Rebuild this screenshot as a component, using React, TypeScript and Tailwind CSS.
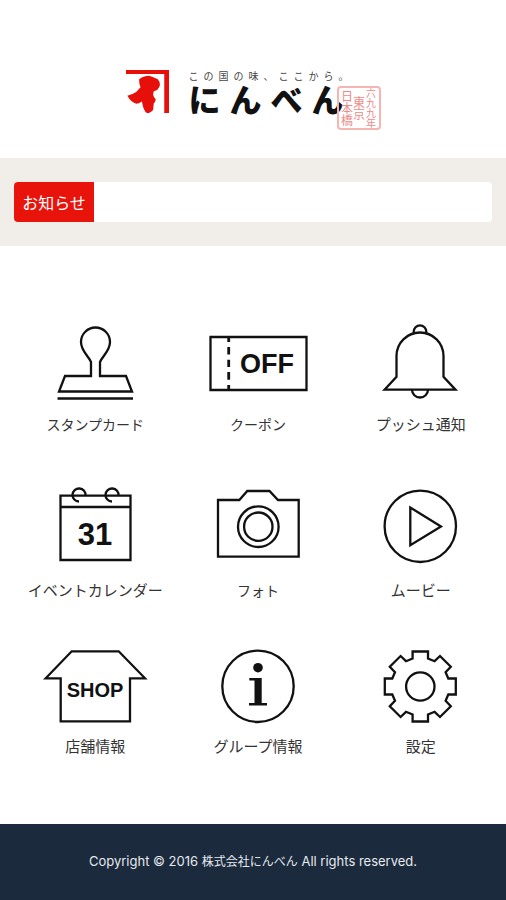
import type { ReactNode } from "react"

type MenuItem = {
    label: string
    href: string
    small?: boolean
    height: number
    icon: ReactNode
}

const menu: MenuItem[] = [
    {
        label: "スタンプカード",
        href: "#stamp",
        small: true,
        height: 80,
        icon: (
            <>
                <path d="M48 54V40C45.5 34 38 29 38 20a14.5 14.5 0 0 1 29 0C67 29 59.500 34 57 40V54H83L89 69.500H16L22 54Z" />
                <path d="M14.500 76.500H90" />
            </>
        ),
    },
    {
        label: "クーポン",
        href: "#coupon",
        small: true,
        height: 80,
        icon: (
            <>
                <path d="M4.500 15H100.500V68H4.500Z" />
                <path d="M22.700 15V20M22.700 25V32.500M22.700 37.700V45M22.700 50V57.700M22.700 63V68" strokeWidth={2.800} />
                <IconText x={61} y={51} size={27}>OFF</IconText>
            </>
        ),
    },
    {
        label: "プッシュ通知",
        href: "#push",
        height: 80,
        icon: (
            <>
                <path d="M15.500 67.700 27.500 54.700V34a23.500 23.500 0 0 1 47 0V54.700L86.500 67.700Z" />
                <path d="M44.700 11V9.700a6.300 6.300 0 0 1 12.600 0V11" />
                <path d="M43 67.700a8 7.800 0 0 0 16 0" />
            </>
        ),
    },
    {
        label: "イベントカレンダー",
        href: "#event",
        height: 84,
        icon: (
            <>
                <path d="M17.500 11.700H87.500V76H17.500ZM17.500 23H87.500" />
                <path d="M42.500 11.700A6.500 6.500 0 1 0 36 17.500M75.500 11.700A6.500 6.500 0 1 0 69 17.500" />
                <IconText x={52} y={61} size={31}>31</IconText>
            </>
        ),
    },
    {
        label: "フォト",
        href: "#photo",
        small: true,
        height: 84,
        icon: (
            <>
                <path d="M12 16H33.300L41.300 7H63.500L72 16H92.700V72.700H12Z" />
                <circle cx="52.300" cy="42.700" r="20.300" />
                <circle cx="52.300" cy="42.700" r="14.200" />
            </>
        ),
    },
    {
        label: "ムービー",
        href: "#movie",
        height: 84,
        icon: (
            <>
                <circle cx="51.300" cy="42.300" r="35.700" />
                <path d="M41.300 23.500V61.300L72 42.500Z" />
            </>
        ),
    },
    {
        label: "店舗情報",
        href: "#shop",
        height: 74,
        icon: (
            <>
                <path d="M28.700 1.300H75.700L102 28.300H87V71.300H17.700V28.300H2.700Z" />
                <IconText x={52} y={47} size={20}>SHOP</IconText>
            </>
        ),
    },
    {
        label: "グループ情報",
        href: "#group",
        height: 74,
        icon: (
            <>
                <circle cx="52" cy="36.300" r="35.700" />
                <circle cx="52" cy="17.700" r="4.800" fill="#111" stroke="none" />
                <path d="M43.300 28H55.700V53H61V55.500H43V53H48.500V30.500H43.300Z" fill="#111" stroke="none" />
            </>
        ),
    },
    {
        label: "設定",
        href: "#settings",
        height: 74,
        icon: (
            <g transform="translate(51.300 36.500)">
                <path d="M-7.700-35H7.700V-28L14.300-25.300 19.700-30.500 30.500-19.700 25.300-14.300 28-8H35.500V8H28L25.300 14.300 30.500 19.700 19.700 30.500 14.300 25.300 7.700 28V35H-7.700V28L-14.300 25.300-19.700 30.500-30.500 19.700-25.300 14.300-28 8H-35.500V-8H-28L-25.300-14.300-30.500-19.700-19.700-30.500-14.300-25.300-7.700-28Z" />
                <circle r="14.200" />
            </g>
        ),
    },
]

function IconText({ x, y, size, children }: { x: number, y: number, size: number, children: string }) {
    return (
        <text x={x} y={y} textAnchor="middle" fontSize={size} fontWeight="bold" fill="#111" stroke="none" className="font-['Liberation_Sans',sans-serif]">
            {children}
        </text>
    )
}

function Logo() {
    return (
        <div className="flex justify-center items-start">
            <svg viewBox="36 31 127 127" className="w-[43px] h-[43px] mr-5" fill="#e60f0a" aria-hidden="true">
                <path d="M36 31H163V158H149V43H36Z" />
                <path d="M75 58Q86 49 105 48Q119 54 130 58Q137 66 136 76Q133 90 118 94L116 103Q118 113 124 118Q122 126 118 130L116 149Q106 160 98 158Q88 154 83 124Q74 131 66 131Q50 125 40 107Q56 103 66 96L79 82Q74 74 75 58Z" />
            </svg>
            <div className="flex flex-col">
                <p className="flex gap-[5px] text-[10px] leading-3 text-[#444]">
                    {[..."この国の味、ここから。"].map((c, i) => <span key={i}>{c}</span>)}
                </p>
                <h1 className="flex gap-[9px] text-[32px] leading-8 font-black text-[#111]">
                    {[..."にんべん"].map((c, i) => <span key={i}>{c}</span>)}
                </h1>
            </div>
            <div className="flex flex-row-reverse justify-center items-center w-11 h-11 mt-4 -ml-3 border-2 border-[#f6b5b2] rounded-sm text-xs leading-3 text-[#ee8a88]">
                <span className="text-[10px] [writing-mode:vertical-rl]">六九九年</span>
                <span className="[writing-mode:vertical-rl]">東京</span>
                <span className="[writing-mode:vertical-rl]">日本橋</span>
            </div>
        </div>
    )
}

export default function App() {
    return (
        <div className="flex flex-col min-h-screen bg-white font-['Noto_Sans_CJK_JP',sans-serif]">
            <header className="pt-[70px] pb-7">
                <Logo />
            </header>

            <section className="bg-[#f1eeea] px-3.5 py-6">
                <div className="flex h-10 bg-white rounded-sm overflow-hidden">
                    <h2 className="flex items-center justify-center w-20 bg-[#e8140c] text-white text-base">お知らせ</h2>
                </div>
            </section>

            <nav className="grid grid-cols-3 gap-y-12 pt-[76px] pb-16 pl-3.5 pr-1">
                {menu.map((item) => (
                    <a key={item.href} href={item.href} className="flex flex-col items-center gap-2.5 text-[#333]">
                        <svg width={104} height={item.height} viewBox={`0 0 104 ${item.height}`} fill="none" stroke="#111" strokeWidth={2.3} className="overflow-visible" aria-hidden="true">
                            {item.icon}
                        </svg>
                        <span className={"leading-6 whitespace-nowrap " + (item.small ? "text-sm" : "text-[15px]")}>{item.label}</span>
                    </a>
                ))}
            </nav>

            <footer className="flex items-center justify-center h-[76px] mt-auto bg-[#1b2a3d] text-[#e5e9ee]">
                <small className="text-[13px] font-['Inter','Noto_Sans_CJK_JP',sans-serif]">
                    Copyright © 2016 <span className="text-xs">株式会社にんべん</span> All rights reserved.
                </small>
            </footer>
        </div>
    )
}
